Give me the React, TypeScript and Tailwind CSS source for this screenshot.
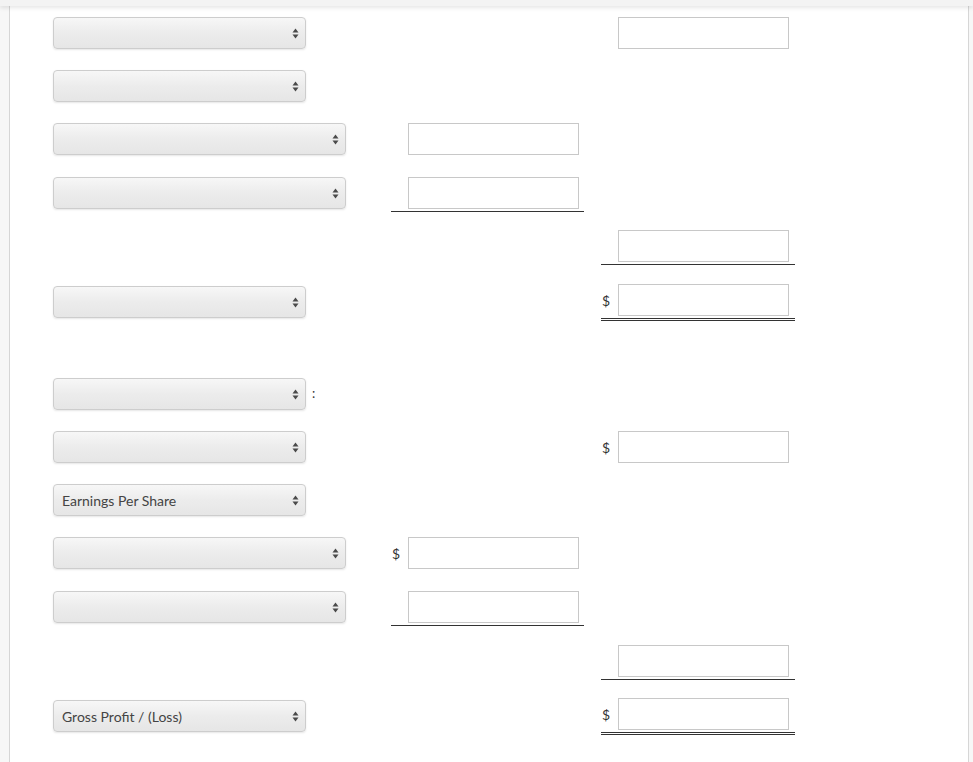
import React from 'react';

type Cell = { dollar?: boolean; line?: 'single' | 'double' } | null;

type Row = {
  h: string;
  select?: { w: 'short' | 'long'; label?: string; colon?: boolean; offset?: boolean };
  b?: Cell;
  c?: Cell;
};

const rows: Row[] = [
  { h: 'h-[53px]', select: { w: 'short' }, c: {} },
  { h: 'h-[53px]', select: { w: 'short' } },
  { h: 'h-[54px]', select: { w: 'long' }, b: {} },
  { h: 'h-[53px]', select: { w: 'long' }, b: { line: 'single' } },
  { h: 'h-[54px]', c: { line: 'single' } },
  { h: 'h-[94px]', select: { w: 'short', offset: true }, c: { dollar: true, line: 'double' } },
  { h: 'h-[53px]', select: { w: 'short', colon: true } },
  { h: 'h-[53px]', select: { w: 'short' }, c: { dollar: true } },
  { h: 'h-[53px]', select: { w: 'short', label: 'Earnings Per Share' } },
  { h: 'h-[54px]', select: { w: 'long' }, b: { dollar: true } },
  { h: 'h-[54px]', select: { w: 'long' }, b: { line: 'single' } },
  { h: 'h-[53px]', c: { line: 'single' } },
  { h: 'h-[64px]', select: { w: 'short', label: 'Gross Profit / (Loss)', offset: true }, c: { dollar: true, line: 'double' } },
];

function Arrows() {
  return (
    <svg width="7" height="11" viewBox="0 0 7 11" className="shrink-0">
      <path d="M3.5 0.5 L6.5 4.5 L0.5 4.5 Z" fill="#4a4a4a" />
      <path d="M3.5 10.5 L6.5 6.5 L0.5 6.5 Z" fill="#4a4a4a" />
    </svg>
  );
}

function Select({ w, label, colon, offset }: NonNullable<Row['select']>) {
  return (
    <div className={`flex items-center ${offset ? 'mt-[2px]' : ''}`}>
      <div
        className={`flex h-[32px] items-center justify-between rounded-[4px] border border-[#cdcdcd] bg-gradient-to-b from-[#f7f7f7] via-[#ececec] to-[#e6e6e6] pl-[8px] pr-[6px] shadow-[0_1px_2px_rgba(0,0,0,0.1)] ${
          w === 'long' ? 'w-[293px]' : 'w-[253px]'
        }`}
      >
        <span className="text-[14px] font-normal text-[#444]">{label ?? ''}</span>
        <Arrows />
      </div>
      {colon && <span className="ml-[6px] text-[13px] text-[#333]">:</span>}
    </div>
  );
}

function AmountCell({ cell }: { cell: Cell | undefined }) {
  if (!cell) return null;
  const line =
    cell.line === 'single'
      ? 'pb-[2px] border-b border-[#333]'
      : cell.line === 'double'
        ? 'pb-[2px] border-b-[3px] border-double border-[#333]'
        : '';
  return (
    <div className={`flex items-center pr-[5px] ${line}`}>
      <span className="w-[17px] pl-[1px] text-[14px] text-[#333]">{cell.dollar ? '$' : ''}</span>
      <div className="h-[32px] w-[171px] border border-[#c8c8c8] bg-white" />
    </div>
  );
}

export default function App() {
  return (
    <div className="min-h-[762px] bg-[#f7f7f7] font-['Lato','Liberation_Sans',sans-serif]">
      <div className="relative z-10 h-[6px] bg-[#f3f3f3] shadow-[0_2px_4px_rgba(0,0,0,0.1)]" />
      <div className="flex">
        <div className="w-[9px] shrink-0" />
        <main className="min-h-[756px] w-[960px] border-x border-[#d6d6d6] bg-white pl-[43px] pt-[11px]">
          {rows.map((row, i) => (
            <div key={i} className={`flex items-start ${row.h}`}>
              <div className="w-[338px] shrink-0">{row.select && <Select {...row.select} />}</div>
              <div className="w-[193px] shrink-0">
                <AmountCell cell={row.b} />
              </div>
              <div className="ml-[17px] w-[194px] shrink-0">
                <AmountCell cell={row.c} />
              </div>
            </div>
          ))}
        </main>
      </div>
    </div>
  );
}
